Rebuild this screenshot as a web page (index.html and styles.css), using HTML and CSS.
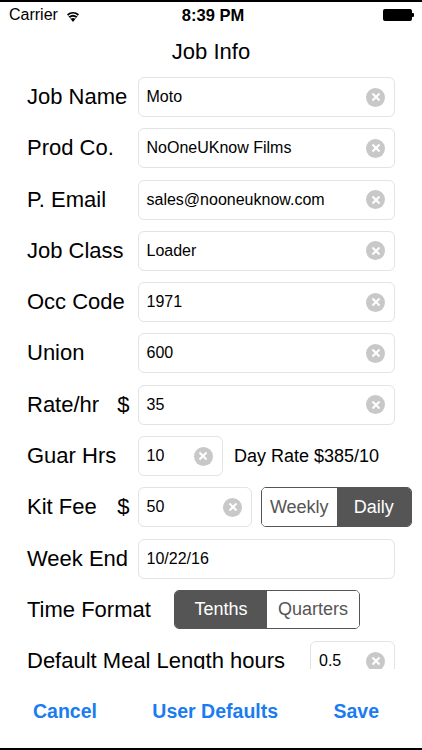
FILE: index.html
```html
<!DOCTYPE html>
<html lang="en">
<head>
    <meta charset="UTF-8">
    <meta name="viewport" content="width=device-width, initial-scale=1.0">
    <title>Job Info</title>
    <link rel="stylesheet" href="styles.css">
</head>
<body>
    <div class="screen">
        <div class="status-bar">
            <div class="carrier">
                Carrier
                <svg class="wifi" width="12" height="12" viewBox="0 0 12 12">
                    <path d="M6 12 L0 4.2 A9 9 0 0 1 12 4.2 Z" fill="#000"/>
                    <path d="M1.6 5.9 A7 7 0 0 1 10.4 5.9" stroke="#fff" stroke-width="1.2" fill="none"/>
                    <path d="M3.4 8.3 A4.6 4.6 0 0 1 8.6 8.3" stroke="#fff" stroke-width="1.2" fill="none"/>
                </svg>
            </div>
            <div class="time">8:39 PM</div>
            <div class="battery">
                <span class="battery-body"></span>
                <span class="battery-nub"></span>
            </div>
        </div>

        <h1 class="title">Job Info</h1>

        <div class="form">
            <div class="row">
                <label class="label">Job Name</label>
                <div class="field"><span class="value">Moto</span><span class="clear"></span></div>
            </div>
            <div class="row">
                <label class="label">Prod Co.</label>
                <div class="field"><span class="value">NoOneUKnow Films</span><span class="clear"></span></div>
            </div>
            <div class="row">
                <label class="label">P. Email</label>
                <div class="field"><span class="value">sales@nooneuknow.com</span><span class="clear"></span></div>
            </div>
            <div class="row">
                <label class="label">Job Class</label>
                <div class="field"><span class="value">Loader</span><span class="clear"></span></div>
            </div>
            <div class="row">
                <label class="label">Occ Code</label>
                <div class="field"><span class="value">1971</span><span class="clear"></span></div>
            </div>
            <div class="row">
                <label class="label">Union</label>
                <div class="field"><span class="value">600</span><span class="clear"></span></div>
            </div>
            <div class="row">
                <label class="label money"><span>Rate/hr</span><span>$</span></label>
                <div class="field"><span class="value">35</span><span class="clear"></span></div>
            </div>
            <div class="row">
                <label class="label">Guar Hrs</label>
                <div class="field field-small"><span class="value">10</span><span class="clear"></span></div>
                <span class="note">Day Rate $385/10</span>
            </div>
            <div class="row">
                <label class="label money"><span>Kit Fee</span><span>$</span></label>
                <div class="field field-kit"><span class="value">50</span><span class="clear"></span></div>
                <div class="segmented seg-kit">
                    <span class="segment">Weekly</span>
                    <span class="segment active">Daily</span>
                </div>
            </div>
            <div class="row">
                <label class="label">Week End</label>
                <div class="field"><span class="value">10/22/16</span></div>
            </div>
            <div class="row">
                <label class="label label-wide">Time Format</label>
                <div class="segmented seg-time">
                    <span class="segment active">Tenths</span>
                    <span class="segment">Quarters</span>
                </div>
            </div>
            <div class="row">
                <label class="label label-long">Default Meal Length hours</label>
                <div class="field field-small"><span class="value">0.5</span><span class="clear"></span></div>
            </div>
        </div>

        <div class="footer">
            <button class="link">Cancel</button>
            <button class="link">User Defaults</button>
            <button class="link">Save</button>
        </div>
    </div>
</body>
</html>
```

FILE: styles.css
```css
* {
    box-sizing: border-box;
}

body {
    margin: 0;
    font-family: 'Liberation Sans', Arial, sans-serif;
    background-color: #fff;
    color: #000;
}

.screen {
    width: 422px;
    height: 750px;
    border-top: 2px solid #000;
    border-bottom: 2px solid #000;
    display: flex;
    flex-direction: column;
}

/* barra de status */
.status-bar {
    height: 26px;
    display: flex;
    align-items: center;
    justify-content: space-between;
    padding: 0 8px 0 9px;
    font-size: 16px;
    position: relative;
}

.carrier {
    display: flex;
    align-items: center;
    gap: 9px;
}

.wifi {
    margin-top: 1px;
}

.time {
    position: absolute;
    left: 0;
    right: 0;
    text-align: center;
    font-weight: bold;
    font-size: 16.5px;
    padding-left: 4px;
}

.battery {
    display: flex;
    align-items: center;
}

.battery-body {
    width: 29px;
    height: 12px;
    background-color: #000;
    border-radius: 2px;
}

.battery-nub {
    width: 2px;
    height: 4px;
    background-color: #000;
    border-radius: 0 1px 1px 0;
}

.title {
    margin: 0;
    padding: 11px 0 12px;
    font-size: 22px;
    font-weight: normal;
    line-height: 26px;
    text-align: center;
}

/* formulário */
.form {
    height: 592px;
    overflow: hidden;
    padding: 0 27px;
}

.row {
    height: 40px;
    margin-bottom: 11.3px;
    display: flex;
    align-items: center;
}

.label {
    width: 110.5px;
    flex-shrink: 0;
    font-size: 22px;
}

.money {
    display: flex;
    justify-content: space-between;
    padding-right: 8px;
}

.label-wide {
    width: 147px;
}

.label-long {
    width: 283px;
}

.field {
    flex: 1;
    height: 40px;
    border: 1px solid #e3e3e3;
    border-radius: 6px;
    display: flex;
    align-items: center;
    padding: 0 9px 0 8px;
    font-size: 16px;
}

.field-small {
    flex: 0 0 85px;
}

.field-kit {
    flex: 0 0 114.5px;
}

.value {
    flex: 1;
    white-space: nowrap;
}

.clear {
    width: 19px;
    height: 19px;
    border-radius: 50%;
    background-color: #c8c8c8;
    position: relative;
}

.clear::before,
.clear::after {
    content: '';
    position: absolute;
    left: 4.5px;
    top: 8.5px;
    width: 10px;
    height: 2px;
    background-color: #fff;
    transform: rotate(45deg);
}

.clear::after {
    transform: rotate(-45deg);
}

.note {
    margin-left: 11.5px;
    font-size: 18px;
    white-space: nowrap;
}

/* controle segmentado */
.segmented {
    display: flex;
    height: 40px;
    border: 1.5px solid #555;
    border-radius: 5px;
    overflow: hidden;
}

.segment {
    flex: 1;
    display: flex;
    align-items: center;
    justify-content: center;
    font-size: 18px;
    color: #555;
    background-color: #fff;
}

.segment.active {
    background-color: #555;
    color: #fff;
}

.seg-kit {
    margin-left: 9px;
    margin-right: -17px;
    width: 151px;
    flex-shrink: 0;
}

.seg-time {
    width: 186px;
    height: 39px;
}

/* rodapé */
.footer {
    flex: 1;
    display: flex;
    justify-content: space-between;
    align-items: flex-start;
    padding: 31px 43px 0 33px;
}

.link {
    background: none;
    border: none;
    padding: 0;
    font-family: 'Liberation Sans', Arial, sans-serif;
    font-size: 19.5px;
    font-weight: bold;
    line-height: 22px;
    color: #1a7cf0;
    cursor: pointer;
}
```
